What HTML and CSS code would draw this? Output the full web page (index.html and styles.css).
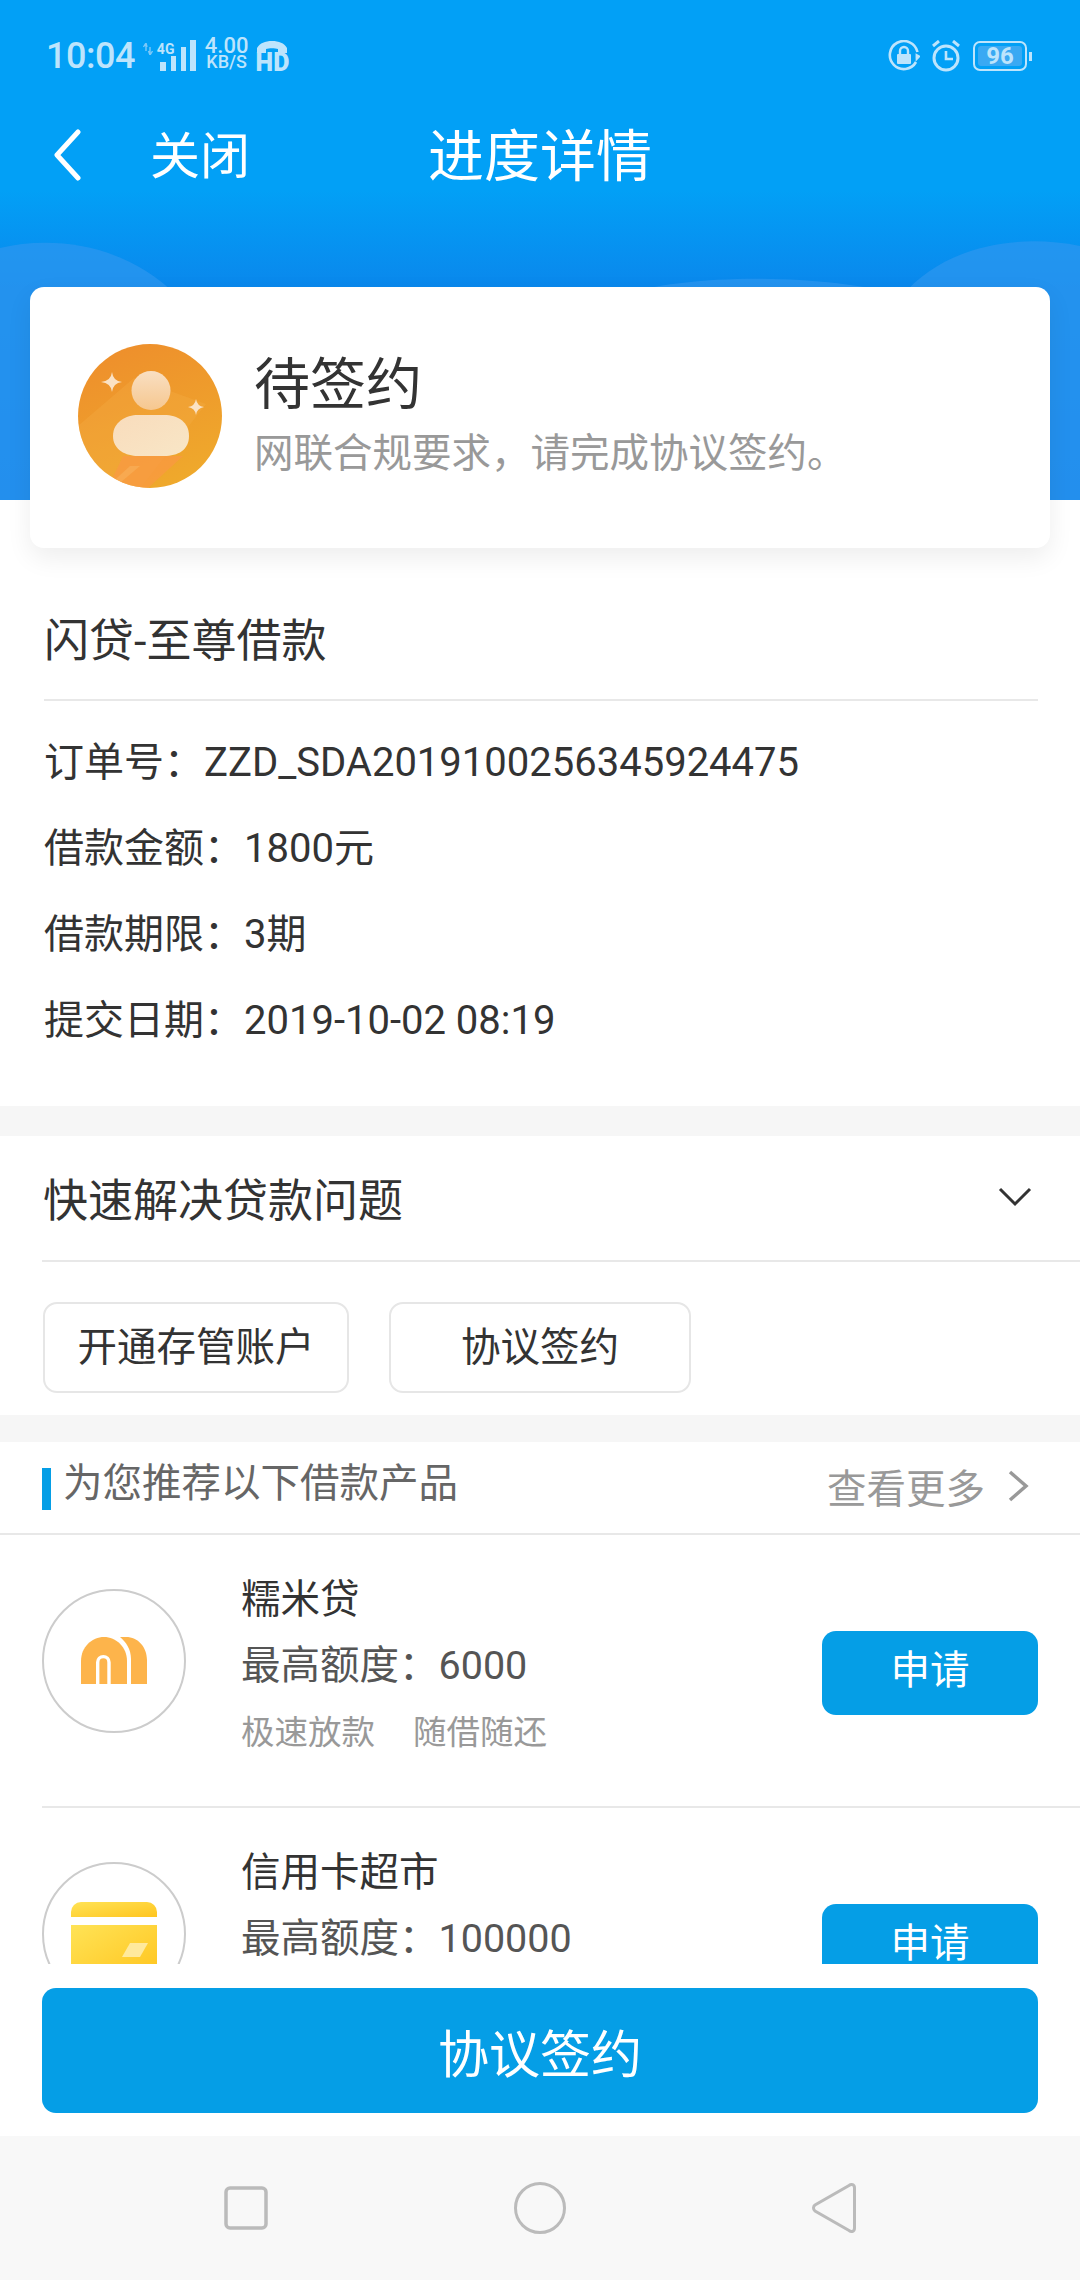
FILE: index.html
```html
<!DOCTYPE html>
<html lang="zh-CN">

<head>
  <meta charset="UTF-8">
  <meta name="viewport" content="width=device-width, initial-scale=1.0">
  <title>进度详情</title>
  <link rel="stylesheet" href="styles.css">
</head>

<body>
  <main class="content">
    <header class="hero">
      <svg class="hero-waves" width="1080" height="500" viewBox="0 0 1080 500">
        <path d="M0 248C60 234 130 248 177 296L200 500H0Z" fill="#2d97f0" opacity="0.7" />
        <path d="M620 296C680 274 820 272 905 296Z" fill="#2d97f0" opacity="0.7" />
        <path d="M902 296C940 250 1010 232 1080 246V500H902Z" fill="#2d97f0" opacity="0.7" />
      </svg>

      <div class="status">
        <span class="time">10:04</span>
        <svg class="arrows" width="10" height="12" viewBox="0 0 10 12">
          <path d="M3 0V8M0.5 4L3 0L4 4M7 12V4M5.5 8L7 12L9.5 8" stroke="#7cc8f8" stroke-width="1.4" fill="none" />
        </svg>
        <span class="signal">
          <b class="net">4G</b>
          <svg width="38" height="32" viewBox="0 0 38 32">
            <g fill="#bde4fc">
              <rect x="2" y="22" width="6" height="9" />
              <rect x="13" y="16" width="5" height="15" />
              <rect x="23" y="7" width="5" height="24" />
              <rect x="32" y="0" width="6" height="31" />
            </g>
          </svg>
        </span>
        <span class="speed"><span>4.00</span><span class="unit">KB/S</span></span>
        <span class="hd">
          <svg width="30" height="13" viewBox="0 0 30 13">
            <path d="M0 12V7C3 2 8 0 15 0S27 2 30 7V12H21V8C18 7 12 7 9 8V12Z" fill="#bde4fc" />
          </svg>
          <b>HD</b>
        </span>

        <span class="status-right">
          <svg width="32" height="32" viewBox="0 0 32 32">
            <path d="M28 22A14 14 0 1 1 29.5 12" fill="none" stroke="#bde4fc" stroke-width="2.6" />
            <path d="M26 14L32 15L29 22Z" fill="#bde4fc" transform="rotate(20 29 18)" />
            <path d="M12 14V11A4 4 0 0 1 20 11V14" fill="none" stroke="#bde4fc" stroke-width="2.4" />
            <rect x="9" y="14" width="14" height="10" rx="1" fill="#bde4fc" />
          </svg>
          <svg class="alarm" width="30" height="32" viewBox="0 0 30 32">
            <circle cx="15" cy="18" r="12" fill="none" stroke="#bde4fc" stroke-width="3" />
            <path d="M15 11V19H22" fill="none" stroke="#bde4fc" stroke-width="2.6" />
            <path d="M2 6L8 1M28 6L22 1" fill="none" stroke="#bde4fc" stroke-width="3" />
          </svg>
          <span class="battery"><span class="battery-level">96</span></span>
          <span class="battery-tip"></span>
        </span>
      </div>

      <nav class="nav">
        <div class="nav-left">
          <svg class="back" width="30" height="52" viewBox="0 0 30 52">
            <path d="M25 3L4 26L25 49" fill="none" stroke="#fff" stroke-width="5" stroke-linecap="round" stroke-linejoin="round" />
          </svg>
          <span class="close">关闭</span>
        </div>
        <h1 class="title">进度详情</h1>
        <div></div>
      </nav>
    </header>

    <section class="state-card">
      <svg class="avatar" width="144" height="144" viewBox="0 0 144 144">
        <defs>
          <linearGradient id="disc" x1="0.3" y1="0" x2="0.7" y2="1">
            <stop offset="0" stop-color="#ee8f2c" />
            <stop offset="1" stop-color="#efaa2c" />
          </linearGradient>
          <linearGradient id="head" x1="0" y1="0" x2="0" y2="1">
            <stop offset="0" stop-color="#f9dfc2" />
            <stop offset="1" stop-color="#f6c78f" />
          </linearGradient>
          <linearGradient id="body" x1="0" y1="0" x2="1" y2="1">
            <stop offset="0" stop-color="#f9dcbc" />
            <stop offset="1" stop-color="#f8e6c6" />
          </linearGradient>
          <clipPath id="disc-clip">
            <circle cx="72" cy="72" r="72" />
          </clipPath>
        </defs>
        <circle cx="72" cy="72" r="72" fill="url(#disc)" />
        <g clip-path="url(#disc-clip)">
          <path d="M0 82L56 34L128 60L62 144H0Z" fill="#f6b04a" opacity="0.3" />
          <path d="M45 112H105L70 144H30Z" fill="#fb9648" opacity="0.6" />
          <path d="M28 144L52 122H62L36 144Z" fill="#f8c170" opacity="0.35" />
        </g>
        <circle cx="73" cy="46.500" r="19.500" fill="url(#head)" />
        <path d="M35 92C35 78 48 71 60 71H86C100 71 111 78 111 92C111 106 100 112 86 112H60C48 112 35 106 35 92Z" fill="url(#body)" />
        <path d="M34 28Q35 37 44 38Q35 39 34 48Q33 39 23 38Q33 37 34 28Z" fill="#fbe2c4" />
        <path d="M118 55Q119 62 126 63Q119 64 118 71Q117 64 110 63Q117 62 118 55Z" fill="#fbe2c4" />
      </svg>
      <div class="state-text">
        <div class="state-name">待签约</div>
        <div class="state-desc">网联合规要求，请完成协议签约。</div>
      </div>
    </section>

    <section class="order">
      <div class="order-name">闪贷-至尊借款</div>
      <div class="order-rows">
        <div class="order-row">订单号：ZZD_SDA2019100256345924475</div>
        <div class="order-row">借款金额：1800元</div>
        <div class="order-row">借款期限：3期</div>
        <div class="order-row">提交日期：2019-10-02 08:19</div>
      </div>
    </section>

    <section class="quick">
      <div class="quick-head">
        <span>快速解决贷款问题</span>
        <svg width="34" height="20" viewBox="0 0 34 20">
          <path d="M2 2L17 17L32 2" fill="none" stroke="#333" stroke-width="3" />
        </svg>
      </div>
      <div class="quick-actions">
        <span class="quick-btn quick-btn-open">开通存管账户</span>
        <span class="quick-btn quick-btn-sign">协议签约</span>
      </div>
    </section>

    <section class="products">
      <div class="products-head">
        <span class="products-title">为您推荐以下借款产品</span>
        <span class="more">
          查看更多
          <svg width="22" height="32" viewBox="0 0 22 32">
            <path d="M3 2L19 16L3 30" fill="none" stroke="#999" stroke-width="3.5" />
          </svg>
        </span>
      </div>

      <div class="product">
        <svg class="product-logo" width="144" height="144" viewBox="0 0 144 144">
          <circle cx="72" cy="72" r="71" fill="#fff" stroke="#ccc" stroke-width="2" />
          <path d="M39 95V72C39 58 50 48 62 48C74 48 85 58 85 72V95Z" fill="#fdb44b" />
          <path d="M55.700 95V73.300A5.650 5.650 0 0 1 67 73.300V95" fill="none" stroke="#fff" stroke-width="3.400" />
          <path d="M78 48H84C96 48 105 58 105 71V95H89V70C89 60 84 53 78 48Z" fill="#fdb44b" />
        </svg>
        <div class="product-info">
          <div class="product-name">糯米贷</div>
          <div class="product-limit">最高额度：6000</div>
          <div class="product-tags"><span>极速放款</span><span>随借随还</span></div>
        </div>
        <span class="apply">申请</span>
      </div>

      <div class="product">
        <svg class="product-logo" width="144" height="144" viewBox="0 0 144 144">
          <defs>
            <linearGradient id="card-fill" x1="0" y1="0" x2="1" y2="1">
              <stop offset="0" stop-color="#ffe356" />
              <stop offset="1" stop-color="#ffc51f" />
            </linearGradient>
          </defs>
          <circle cx="72" cy="72" r="71" fill="#fff" stroke="#ccc" stroke-width="2" />
          <path d="M29 55V50A10 10 0 0 1 39 40H105A10 10 0 0 1 115 50V55Z" fill="url(#card-fill)" />
          <path d="M29 63H115V104A10 10 0 0 1 105 114H39A10 10 0 0 1 29 104Z" fill="url(#card-fill)" />
          <path d="M88 81H106L98 95H80Z" fill="#ffe99c" />
        </svg>
        <div class="product-info">
          <div class="product-name">信用卡超市</div>
          <div class="product-limit">最高额度：100000</div>
        </div>
        <span class="apply">申请</span>
      </div>
    </section>
  </main>

  <div class="footer">
    <span class="sign-btn">协议签约</span>
  </div>

  <div class="softkeys">
    <svg width="44" height="44" viewBox="0 0 44 44">
      <rect x="2" y="2" width="40" height="40" rx="4" fill="none" stroke="#bbb" stroke-width="3.5" />
    </svg>
    <svg width="52" height="52" viewBox="0 0 52 52">
      <circle cx="26" cy="26" r="24.5" fill="none" stroke="#bbb" stroke-width="3" />
    </svg>
    <svg class="softkey-back" width="46" height="52" viewBox="0 0 46 52">
      <path d="M38 3.5C40.5 1.500 43.500 2.500 43.500 6V46C43.500 49.500 40.500 50.500 38 48.500L4 29C2 27.500 2 24.500 4 23Z" fill="none" stroke="#bbb" stroke-width="3" />
    </svg>
  </div>
</body>

</html>
```

FILE: styles.css
```css
* {
  box-sizing: border-box;
}

body {
  margin: 0;
  width: 1080px;
  height: 2280px;
  overflow: hidden;
  display: flex;
  flex-direction: column;
  background: #fff;
  color: #333;
  font-family: Roboto, "Noto Sans CJK SC", sans-serif;
  font-size: 39.500px;
}

.content {
  height: 1964px;
  overflow: hidden;
  flex: none;
}

/* top blue area */
.hero {
  position: relative;
  height: 500px;
  padding-top: 40px;
  background: linear-gradient(#02a0f6 0, #02a0f6 190px, #0a87ec 290px, #0b7de8 100%);
}

.hero-waves {
  position: absolute;
  top: 0;
  left: 0;
}

.status {
  position: relative;
  display: flex;
  align-items: center;
  height: 32px;
  padding: 0 48px 0 46px;
  color: #bde4fc;
}

.time {
  font-size: 36px;
  font-weight: 500;
  letter-spacing: -0.5px;
}

.arrows {
  margin: 0 0 14px 8px;
}

.signal {
  position: relative;
  display: flex;
  width: 38px;
  height: 32px;
  margin-left: 5px;
}

.net {
  position: absolute;
  top: 2px;
  left: -1px;
  font-size: 14px;
  line-height: 14px;
}

.speed {
  display: flex;
  flex-direction: column;
  align-items: center;
  margin: 0 0 4px 9px;
  font-size: 22px;
  font-weight: 500;
  line-height: 16px;
}

.speed .unit {
  font-size: 18px;
}

.hd {
  display: flex;
  flex-direction: column;
  align-items: center;
  margin-left: 9px;
  width: 30px;
  font-size: 25px;
  font-weight: 900;
  line-height: 18px;
}

.status-right {
  display: flex;
  align-items: center;
  margin-left: auto;
}

.alarm {
  margin-left: 11px;
}

.battery {
  display: flex;
  width: 54px;
  height: 30px;
  margin-left: 12px;
  padding: 3px;
  border: 2px solid #bde4fc;
  border-radius: 7px;
}

.battery-level {
  flex: 1;
  background: #3aa9f3;
  border-radius: 3px;
  font-size: 24px;
  font-weight: 700;
  line-height: 20px;
  text-align: center;
}

.battery-tip {
  width: 3px;
  height: 9px;
  margin-left: 2px;
  background: #bde4fc;
}

.nav {
  position: relative;
  display: grid;
  grid-template-columns: 1fr auto 1fr;
  align-items: center;
  height: 64px;
  margin-top: 53px;
  padding: 0 53px;
  color: #fff;
}

.nav-left {
  display: flex;
  align-items: center;
}

.back {
  margin-bottom: 4px;
}

.close {
  margin-left: 67px;
  font-size: 50px;
  line-height: 64px;
}

.title {
  margin: 0;
  font-size: 56px;
  font-weight: 400;
  line-height: 64px;
}

/* status card over the header */
.state-card {
  position: relative;
  display: flex;
  align-items: center;
  height: 261px;
  margin: -213px 30px 0;
  padding: 0 0 4px 48px;
  background: #fff;
  border-radius: 14px;
  box-shadow: 0 10px 26px rgba(0, 0, 0, 0.07);
}

.state-text {
  margin: 0 0 0 32px;
}

.state-name {
  font-size: 56px;
  line-height: 70px;
  margin-top: -1px;
  margin-bottom: 8px;
}

.state-desc {
  font-size: 39.500px;
  line-height: 52px;
  color: #999;
}

.order {
  height: 558px;
  padding: 64px 0 0 44px;
}

.order-name {
  width: 994px;
  height: 89px;
  font-size: 45px;
  line-height: 60px;
  border-bottom: 2px solid #e8e8e8;
}

.order-rows {
  margin-top: 19px;
  font-size: 40px;
}

.order-row {
  line-height: 86px;
  height: 86px;
}

.quick {
  height: 309px;
  padding-left: 42px;
  border-top: 30px solid #f6f6f6;
}

.quick-head {
  display: flex;
  justify-content: space-between;
  align-items: center;
  height: 126px;
  padding: 0 48px 2px 1px;
  font-size: 45px;
  border-bottom: 2px solid #e8e8e8;
}

.quick-actions {
  display: flex;
  margin-top: 40px;
  margin-left: 1px;
}

.quick-btn {
  display: flex;
  justify-content: center;
  align-items: center;
  height: 91px;
  padding-bottom: 8px;
  border: 2px solid #e6e6e6;
  border-radius: 14px;
}

.quick-btn-open {
  width: 306px;
}

.quick-btn-sign {
  width: 302px;
  margin-left: 40px;
}

.products {
  border-top: 27px solid #f6f6f6;
}

.products-head {
  display: flex;
  justify-content: space-between;
  height: 93px;
  padding: 0 51px 0 42px;
  border-bottom: 2px solid #e8e8e8;
}

.products-title {
  position: relative;
  align-self: flex-start;
  margin-top: 14px;
  padding-left: 21px;
  line-height: 56px;
  color: #666;
}

/* small blue mark in front of the title */
.products-title::before {
  content: "";
  position: absolute;
  left: 0;
  top: 12px;
  width: 9px;
  height: 42px;
  background: #059ee6;
}

.more {
  display: flex;
  align-items: center;
  gap: 22px;
  margin-bottom: 4px;
  color: #999;
}

.product {
  display: flex;
  align-items: flex-start;
  height: 273px;
  margin-left: 42px;
  padding-right: 42px;
  border-bottom: 2px solid #e8e8e8;
}

.product-logo {
  flex: none;
  margin-top: 54px;
}

.product-info {
  flex: 1;
  margin: 32px 0 0 55px;
}

.product-name,
.product-limit {
  height: 66px;
  line-height: 66px;
}

.product-limit {
  color: #555;
}

.product-tags {
  display: flex;
  gap: 38px;
  font-size: 33.500px;
  line-height: 68px;
  color: #999;
}

.apply {
  display: flex;
  justify-content: center;
  align-items: center;
  flex: none;
  width: 216px;
  height: 84px;
  margin-top: 96px;
  padding-bottom: 14px;
  background: #059ee6;
  border-radius: 14px;
  color: #fff;
}

.footer {
  flex: none;
  height: 172px;
  padding: 24px 42px 0;
}

.sign-btn {
  display: flex;
  justify-content: center;
  align-items: center;
  height: 125px;
  background: #059ee6;
  border-radius: 14px;
  color: #fff;
  font-size: 51px;
}

.softkeys {
  flex: 1;
  display: flex;
  align-items: center;
  gap: 246px;
  padding-left: 224px;
  background: #f8f8f8;
}

.softkey-back {
  margin-left: -1px;
}
```
